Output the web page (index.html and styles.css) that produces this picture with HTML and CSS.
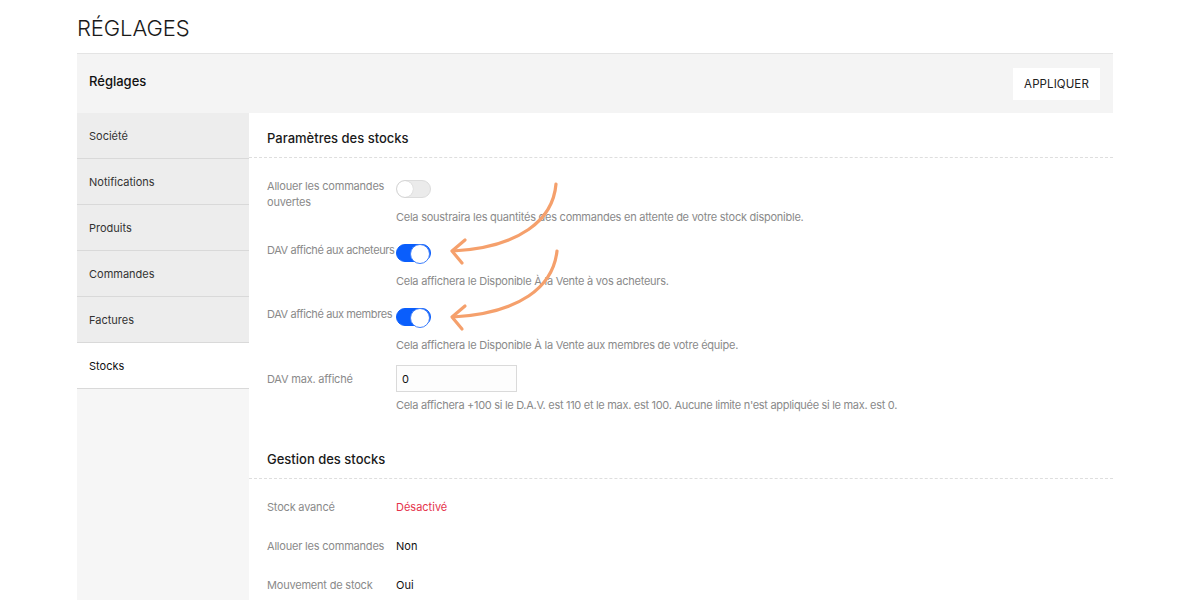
FILE: index.html
```html
<!DOCTYPE html>
<html lang="fr">
<head>
<meta charset="utf-8">
<title>Réglages</title>
<link rel="stylesheet" href="styles.css">
</head>
<body>
<div class="page">
  <h1 class="title">RÉGLAGES</h1>
  <div class="panel">
    <div class="panel-head">
      <span class="panel-name">Réglages</span>
      <button class="btn">APPLIQUER</button>
    </div>
    <div class="panel-body">
      <nav class="side">
        <div class="side-item">Société</div>
        <div class="side-item">Notifications</div>
        <div class="side-item">Produits</div>
        <div class="side-item">Commandes</div>
        <div class="side-item">Factures</div>
        <div class="side-item active">Stocks</div>
      </nav>
      <main class="main">
        <section class="section">
          <h2 class="sec-title">Paramètres des stocks</h2>
          <div class="setting">
            <div class="label">Allouer les commandes ouvertes</div>
            <div class="control">
              <span class="toggle"></span>
              <p class="desc">Cela soustraira les quantités des commandes en attente de votre stock disponible.</p>
            </div>
          </div>
          <div class="setting">
            <div class="label tight">DAV affiché aux acheteurs</div>
            <div class="control">
              <span class="toggle on"></span>
              <p class="desc">Cela affichera le Disponible À la Vente à vos acheteurs.</p>
            </div>
          </div>
          <div class="setting short">
            <div class="label tight">DAV affiché aux membres</div>
            <div class="control">
              <span class="toggle on"></span>
              <p class="desc">Cela affichera le Disponible À la Vente aux membres de votre équipe.</p>
            </div>
          </div>
          <div class="setting input-row">
            <div class="label narrow">DAV max. affiché</div>
            <div class="control">
              <div class="input">0</div>
              <p class="desc narrow">Cela affichera +100 si le D.A.V. est 110 et le max. est 100. Aucune limite n'est appliquée si le max. est 0.</p>
            </div>
          </div>
        </section>
        <section class="section">
          <h2 class="sec-title">Gestion des stocks</h2>
          <div class="list">
            <div class="line"><span class="label">Stock avancé</span><span class="value red">Désactivé</span></div>
            <div class="line"><span class="label">Allouer les commandes</span><span class="value">Non</span></div>
            <div class="line"><span class="label">Mouvement de stock</span><span class="value">Oui</span></div>
          </div>
        </section>
      </main>
    </div>
  </div>
  <svg class="arrows" width="1200" height="600" viewBox="0 0 1200 600">
    <g fill="none" stroke="#f5a06c" stroke-width="3.2" stroke-linecap="round" stroke-linejoin="round">
      <path d="M556 184 C553 220 520 247 453 251"/>
      <path d="M465 240 L452 251 L462 263"/>
      <path d="M557 251 C553 287 520 313 453 317"/>
      <path d="M465 306 L452 317 L462 329"/>
    </g>
  </svg>
</div>
</body>
</html>
```

FILE: styles.css
```css
* { box-sizing: border-box; }
html, body { margin: 0; padding: 0; background: #fff; }
body {
  font-family: Inter, "Liberation Sans", Arial, sans-serif;
  color: #222;
  font-size: 11px;
}
.page {
  position: relative;
  width: 1036px;
  margin-left: 77px;
}
.title {
  margin: 0;
  height: 53px;
  padding-top: 15px;
  font-size: 22px;
  font-weight: 300;
  line-height: 26px;
  letter-spacing: -0.1px;
  color: #1a1a1a;
}
.panel { border-top: 1px solid #e4e4e4; }
.panel-head {
  height: 59px;
  background: #f4f4f4;
  display: flex;
  align-items: center;
  justify-content: space-between;
  padding: 0 13px 0 12px;
}
.panel-name { font-size: 13px; font-weight: 500; color: #111; margin-bottom: 5px; }
.btn {
  width: 87px;
  height: 32px;
  background: #fff;
  border: none;
  font-family: inherit;
  font-size: 11.5px;
  color: #222;
  letter-spacing: 0.1px;
  padding: 0;
}
.panel-body { display: flex; min-height: 487px; }
.side {
  width: 172px;
  flex: none;
  background: #f6f6f6;
}
.side-item {
  height: 46px;
  background: #ededed;
  border-bottom: 1px solid #d9d9d9;
  padding-left: 12px;
  display: flex;
  align-items: center;
  font-size: 11px;
  color: #333;
}
.side-item.active { background: #fff; color: #111; }
.main { flex: 1; }
.sec-title {
  margin: 0;
  height: 45px;
  padding: 17px 0 0 18px;
  font-size: 13px;
  font-weight: 500;
  line-height: 16px;
  color: #1a1a1a;
  border-bottom: 1px dashed #dedede;
}
.section:first-child { padding-bottom: 21px; }
.section:first-child .setting:first-of-type { margin-top: 22px; }
.setting {
  display: flex;
  padding-left: 18px;
  margin-bottom: 19px;
}
.setting.short { margin-bottom: 12px; }
.setting .label {
  width: 129px;
  flex: none;
  line-height: 16px;
  margin-top: -2px;
  padding-right: 6px;
  color: #8a8a8a;
  letter-spacing: -0.2px;
}
.setting .label.tight { white-space: nowrap; padding-right: 0; letter-spacing: -0.4px; }
.setting.input-row { margin-bottom: 0; }
.setting.input-row .label { margin-top: 6px; }
.control { flex: 1; }
.label, .desc { font-size: 11px; color: #8a8a8a; }
.desc { margin: 11px 0 0; line-height: 16px; letter-spacing: -0.25px; }
.desc.narrow { letter-spacing: -0.3px; }
.input-row .desc { margin-top: 5px; }
.toggle {
  display: block;
  position: relative;
  width: 35px;
  height: 18px;
  border-radius: 9px;
  background: #ebebeb;
  border: 1px solid #dcdcdc;
}
.toggle::after {
  content: "";
  position: absolute;
  top: 0;
  left: 0;
  width: 16px;
  height: 16px;
  border-radius: 50%;
  background: #fff;
  box-shadow: 0 0 1px rgba(0,0,0,0.25);
}
.toggle.on { background: #0a5efc; border-color: #0a5efc; }
.toggle.on::after { left: auto; right: 0; top: -1px; width: 18px; height: 18px; box-shadow: none; border: 1px solid #3f7ffb; }
.input {
  width: 121px;
  height: 27px;
  border: 1px solid #dadada;
  background: #fdfdfd;
  padding-left: 5px;
  display: flex;
  align-items: center;
  font-size: 11px;
  color: #111;
}
.list { padding-top: 8px; }
.line {
  display: flex;
  height: 39px;
  padding: 12px 0 0 18px;
  line-height: 16px;
}
.line .label { width: 129px; flex: none; color: #8a8a8a; letter-spacing: -0.2px; }
.value { color: #111; font-size: 11px; }
.value.red { color: #e5334b; }
.arrows {
  position: absolute;
  left: -77px;
  top: 0;
  pointer-events: none;
}
```
